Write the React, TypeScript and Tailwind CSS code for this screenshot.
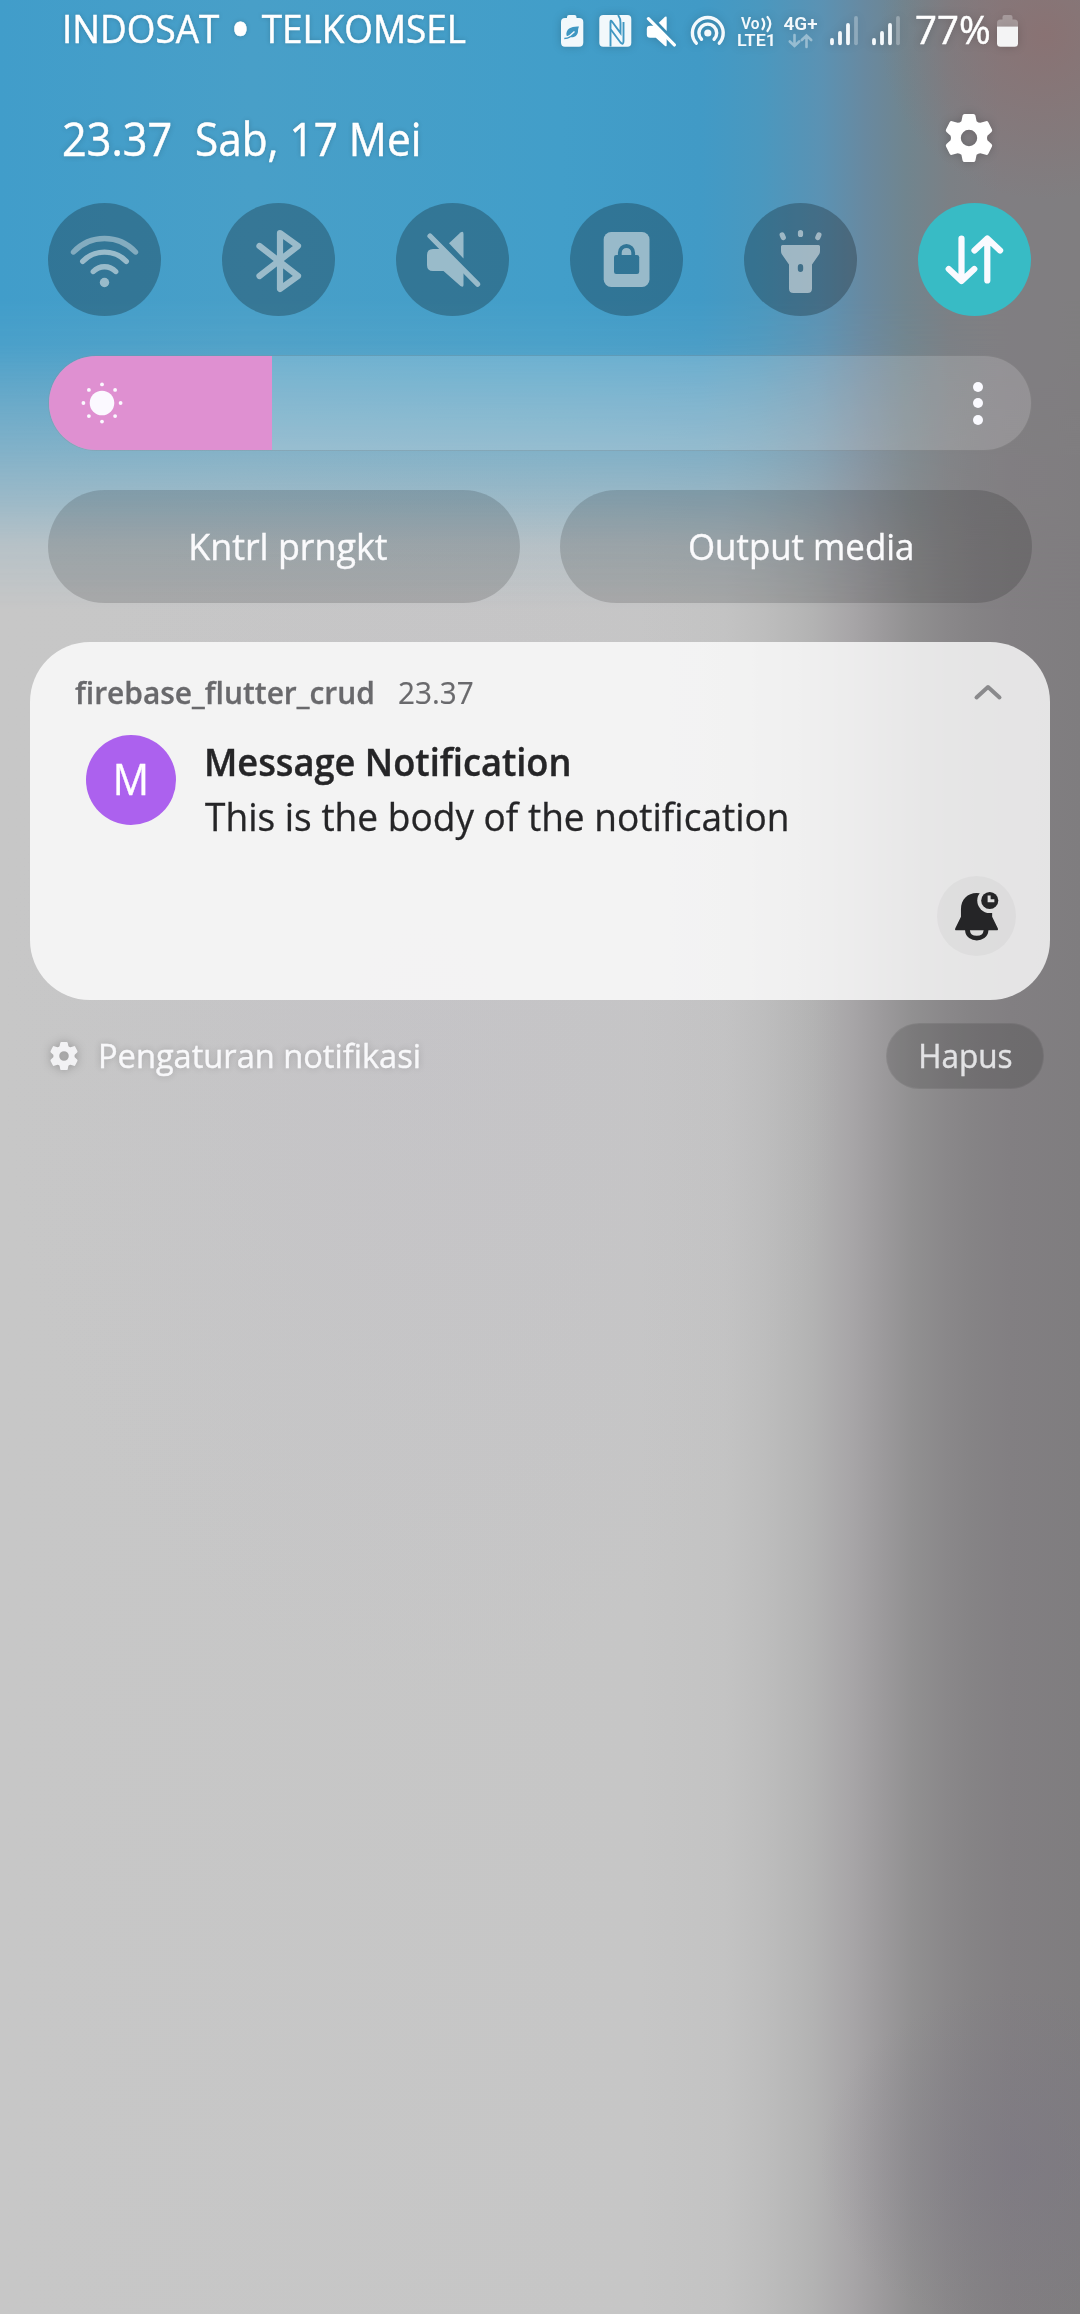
import type { ReactNode } from "react";

const ICON_SHADOW = "drop-shadow-[0_0_4px_rgba(0,0,0,0.18)]";

function Wallpaper() {
  return (
    <div className="absolute inset-0 overflow-hidden bg-[linear-gradient(90deg,#c7c7c7_0px,#c6c6c6_640px,#c3c3c3_725px,#bdbdbd_765px,#b3b3b3_812px,#a8a6a8_850px,#9b999b_885px,#919091_912px,#8a888a_945px,#858385_975px,#827f82_1010px,#7f7d7f_1080px)]">
      <div className="absolute left-0 top-[400px] h-[1300px] w-[850px] bg-[radial-gradient(closest-side,rgba(192,188,200,0.25),rgba(192,188,200,0))]" />
      <div className="absolute right-[-140px] top-[1990px] h-[340px] w-[400px] bg-[radial-gradient(closest-side,rgba(122,117,132,0.4),rgba(122,117,132,0))]" />
      <div className="absolute inset-x-0 top-0 h-[620px] bg-[linear-gradient(90deg,#419dca_0px,#489fc8_250px,#429ec9_560px,#419ac6_700px,#4a98bf_760px,#5b92b3_822px,#6889a0_865px,#70858f_905px,#7b8085_950px,#807e82_1000px,#807e80_1080px)] [mask-image:linear-gradient(180deg,#000_0px,#000_300px,rgba(0,0,0,0.93)_345px,rgba(0,0,0,0.7)_400px,rgba(0,0,0,0.47)_463px,rgba(0,0,0,0.3)_505px,rgba(0,0,0,0.12)_545px,transparent_610px)]" />
      <div className="absolute right-[-130px] top-[-130px] h-[330px] w-[330px] bg-[radial-gradient(closest-side,rgba(142,108,108,0.65),rgba(142,108,108,0))]" />
    </div>
  );
}

function MuteShape({ thick = false }: { thick?: boolean }) {
  return (
    <>
      <path d="M67.5 31 V55.5 L53 40.3 L64.5 29.6 Q67.5 27.5 67.5 31Z" />
      <path d="M37 46 H47 L67.5 67 V82 Q67.5 85 64.5 83 L47.5 68 H37 Q31 68 31 62 V52 Q31 46 37 46Z" />
      <path d="M34 33 L81.6 81.2" stroke="#fff" strokeWidth={thick ? 6 : 5.2} strokeLinecap="round" />
    </>
  );
}

function StatusBar() {
  return (
    <div className="flex h-[56px] items-start pl-[62px] pr-[62px] text-white">
      <span className="inline-block origin-left scale-x-[0.945] whitespace-nowrap text-[39px] leading-[56px] [-webkit-text-stroke:0.5px] [text-shadow:0_0_6px_rgba(0,0,0,0.2)]">
        INDOSAT <span className="relative top-[8px] mx-[1px] text-[60px] leading-[36px]">•</span> TELKOMSEL
      </span>
      <div className={"ml-auto flex items-start " + ICON_SHADOW}>
        <svg className="mt-[15px] h-8 w-[23px]" viewBox="561 15 23 32" fill="#f2f8fb">
          <path d="M567 18 V17 Q567 15 569 15 H574.500 Q576.500 15 576.500 17 V18 H579 Q583.300 18 583.300 22 V42.500 Q583.300 46.700 579 46.700 H565 Q561 46.700 561 42.500 V22 Q561 18 565 18Z" />
          <path d="M579 26.500 C572 26 565.500 28.500 566.500 35.500 C570 38.500 577.500 38 578 31.500 C578 29.500 578.300 28 579 26.500Z" fill="#3f97c2" />
          <path d="M574.500 31.500 C571.500 35 569 36.500 564.500 38.300" fill="none" stroke="#f2f8fb" strokeWidth="1.300" />
          <path d="M564.300 38.600 C567 38.600 568.500 38 570 37" fill="none" stroke="#3f97c2" strokeWidth="1.500" />
        </svg>
        <svg className="ml-[15px] mt-[15px] h-8 w-[33px]" viewBox="599 15 33 32" fill="none">
          <rect x="599.300" y="15" width="32" height="31.700" rx="4" fill="#f2f8fb" />
          <path d="M610.500 46.500 V22 Q610.500 19.500 612 21.500 L620.500 33 V23 Q620.500 18 618 15" stroke="#3f97c2" strokeWidth="1.900" />
          <path d="M610.800 29.500 L620.500 42.500 Q623.500 45.500 623.500 41 V22" stroke="#3f97c2" strokeWidth="1.900" />
        </svg>
        <svg className="ml-[14px] mt-[16px] h-[31px] w-[31px]" viewBox="30 28 56 57" fill="#fff">
          <MuteShape thick />
        </svg>
        <svg className="ml-[13px] mt-[15px] h-8 w-[36px]" viewBox="690 15 36 32" fill="none" stroke="#f4f9fc" strokeWidth="3.400" strokeLinecap="round">
          <circle cx="707.800" cy="33" r="3.600" fill="#f4f9fc" stroke="none" />
          <path d="M696.300 43.200 A15.400 15.400 0 1 1 719.300 43.200" />
          <path d="M701.500 39.300 A8.900 8.900 0 1 1 714.100 39.300" />
        </svg>
        <svg className="ml-[9px] mt-[11px] h-[40px] w-[44px] overflow-visible" viewBox="735 11 44 40" fill="#f4f9fc">
          <text x="741" y="28.900" fontFamily="Roboto" fontWeight="600" fontSize="16.500" textLength="18.500" lengthAdjust="spacingAndGlyphs">Vo</text>
          <path d="M762.500 19 Q766 24 762.500 29 M767.500 17 Q773 23.500 767.500 31" fill="none" stroke="#f4f9fc" strokeWidth="2.200" strokeLinecap="round" />
          <text x="737" y="46.200" fontFamily="Roboto" fontWeight="600" fontSize="17" textLength="39" lengthAdjust="spacingAndGlyphs">LTE1</text>
        </svg>
        <svg className="ml-[2px] mt-[9px] h-[40px] w-[40px] overflow-visible" viewBox="781 9 40 40" fill="#f4f9fc">
          <text x="783.600" y="29.500" fontFamily="Roboto" fontWeight="600" fontSize="18" textLength="34" lengthAdjust="spacingAndGlyphs">4G+</text>
          <path d="M794.500 35 V46 M789.800 41.500 L794.500 46 L799.200 41.500 M806.500 47 V36 M801.800 40 L806.500 35.500 L811.200 40" fill="none" stroke="#fff" strokeOpacity="0.400" strokeWidth="2.600" strokeLinecap="round" />
        </svg>
        {["ml-[9px]", "ml-[14px]"].map((margin) => (
          <svg key={margin} className={margin + " mt-[15px] h-8 w-[28px]"} viewBox="830 15 28 32" stroke="#f4f9fc" strokeWidth="3.800" strokeLinecap="round">
            <path d="M832 40 V43.300 M840 33 V43.300 M848 25 V43.300" />
            <path d="M856 18 V43.300" strokeOpacity="0.300" />
          </svg>
        ))}
        <span className="ml-[15px] inline-block origin-left scale-x-[0.984] whitespace-nowrap text-[39px] leading-[57px] [-webkit-text-stroke:0.5px]">77%</span>
        <svg className="ml-[5px] mt-[15px] h-8 w-[21px]" viewBox="997 15 21 32" fill="#f4f4f5">
          <path d="M1002.500 19.500 V17 Q1002.500 15 1004.500 15 H1010.500 Q1012.500 15 1012.500 17 V19.500 H1014.500 Q1018 19.500 1018 23 V26.500 H997 V23 Q997 19.500 1000.500 19.500Z" fillOpacity="0.300" />
          <path d="M997 26.500 H1018 V43.200 Q1018 46.700 1014.500 46.700 H1000.500 Q997 46.700 997 43.200Z" />
        </svg>
      </div>
    </div>
  );
}

function Gear({ className }: { className: string }) {
  return (
    <svg className={className} viewBox="-24 -24 48 48" fill="currentColor">
      <path
        fillRule="evenodd"
        d="M-4.500 -24 H4.500 Q6 -24 6.400 -22.500 L7.600 -16.800 Q9.200 -15.200 11.300 -15.200 L16.900 -16.800 Q18.400 -17.300 19.200 -15.900 L23 -8.600 Q23.600 -7.200 22.500 -6.100 L18.400 -2.200 Q17.600 0 18.400 2.200 L22.500 6.100 Q23.600 7.200 23 8.600 L19.200 15.900 Q18.400 17.300 16.900 16.800 L11.300 15.200 Q9.200 15.200 7.600 16.800 L6.400 22.500 Q6 24 4.500 24 H-4.500 Q-6 24 -6.400 22.500 L-7.600 16.800 Q-9.200 15.200 -11.300 15.200 L-16.900 16.800 Q-18.400 17.300 -19.200 15.900 L-23 8.600 Q-23.600 7.200 -22.500 6.100 L-18.400 2.200 Q-17.600 0 -18.400 -2.200 L-22.500 -6.100 Q-23.600 -7.200 -23 -8.600 L-19.200 -15.900 Q-18.400 -17.300 -16.900 -16.800 L-11.300 -15.200 Q-9.200 -15.200 -7.600 -16.800 L-6.400 -22.500 Q-6 -24 -4.500 -24Z M0 -8.200 A8.200 8.200 0 1 0 0 8.200 A8.200 8.200 0 1 0 0 -8.200Z"
      />
    </svg>
  );
}

function Toggle({ active = false, children }: { active?: boolean; children: ReactNode }) {
  return (
    <div className={active ? "size-[113px] rounded-full bg-[#38bbc5]" : "size-[113px] rounded-full bg-black/25"}>
      <svg className={active ? "size-full" : "size-full opacity-50"} viewBox="0 0 113 113" fill="#fff">
        {children}
      </svg>
    </div>
  );
}

function QuickToggles() {
  return (
    <div className="mt-[36px] flex justify-between pl-[48px] pr-[49px]">
      <Toggle>
        <g fill="none" stroke="#fff" strokeWidth="5.400" strokeLinecap="round">
          <path d="M25.500 49 A42.400 42.400 0 0 1 87.500 49" strokeOpacity="0.780" />
          <path d="M34.700 58.300 A30.500 30.500 0 0 1 78.300 58.300" />
          <path d="M45.300 68.500 A15.500 15.500 0 0 1 67.700 68.500" />
        </g>
        <circle cx="56.500" cy="79.500" r="4.700" />
      </Toggle>
      <Toggle>
        <path d="M37.500 43 L76 73 L58 86 V30 L76 43 L37.500 73" fill="none" stroke="#fff" strokeWidth="6.200" strokeLinecap="round" strokeLinejoin="round" />
      </Toggle>
      <Toggle>
        <MuteShape />
      </Toggle>
      <Toggle>
        <mask id="lock-cut">
          <rect width="113" height="113" fill="#fff" />
          <rect x="44" y="52" width="25.200" height="19" rx="2.200" fill="#000" />
          <path d="M49.800 54 V49.700 A6.700 6.700 0 0 1 63.200 49.700 V54" fill="none" stroke="#000" strokeWidth="3.800" />
        </mask>
        <rect x="33.700" y="29" width="45.800" height="55" rx="7.500" mask="url(#lock-cut)" />
      </Toggle>
      <Toggle>
        <path
          fillRule="evenodd"
          d="M38.500 42 H74.500 Q76 42 76 43.500 V48 Q76 50 75 51.500 L68 61.500 V85.500 Q68 90 63.500 90 H49.500 Q45 90 45 85.500 V61.500 L38 51.500 Q37 50 37 48 V43.500 Q37 42 38.500 42Z M56.500 61 Q53.800 61 53.800 64 V66 Q53.800 69 56.500 69 Q59.200 69 59.200 66 V64 Q59.200 61 56.500 61Z"
        />
        <path d="M56.500 29.600 V31.500 M38.200 31.900 L39.300 34.500 M74.900 31.900 L73.800 34.500" stroke="#fff" strokeWidth="5.200" strokeLinecap="round" />
      </Toggle>
      <Toggle active>
        <path d="M43.500 35.500 V77 M30.700 66 L43.500 78 L56.300 66 M69.300 77.500 V36 M56.500 47.500 L69.300 35.500 L82.100 47.500" fill="none" stroke="#fafaff" strokeWidth="6.200" strokeLinecap="round" strokeLinejoin="round" />
      </Toggle>
    </div>
  );
}

const RAYS = [[0, -18.6], [13.1, -13.1], [18.6, 0], [13.1, 13.1], [0, 18.6], [-13.1, 13.1], [-18.6, 0], [-13.1, -13.1]];

function BrightnessSlider() {
  return (
    <div className="ml-[48px] mr-[48px] mt-[39px] flex h-[96px] overflow-hidden rounded-full border border-black/12 bg-white/16">
      <div className="flex w-[223px] items-center bg-[#df90d1] pl-[32px]">
        <svg className="size-[42px]" viewBox="-21 -21 42 42" fill="#fbf9ff">
          <circle r="12.300" />
          {RAYS.map(([x, y]) => (
            <circle key={x + "," + y} cx={x} cy={y} r="1.900" />
          ))}
        </svg>
      </div>
      <div className="ml-auto mr-[48px] flex flex-col items-center justify-center gap-[6.500px]">
        <span className="size-[10px] rounded-full bg-[#fafaff]" />
        <span className="size-[10px] rounded-full bg-[#fafaff]" />
        <span className="size-[10px] rounded-full bg-[#fafaff]" />
      </div>
    </div>
  );
}

function NotificationCard() {
  return (
    <div className="ml-[30px] mr-[30px] mt-[39px] flex h-[358px] flex-col rounded-[60px] bg-white/79">
      <div className="flex h-[100px] items-center pl-[45px] pr-[47px] text-[31px] leading-[104px] text-[#69696c]">
        <span className="inline-block origin-left scale-x-[0.965] whitespace-nowrap font-semibold [-webkit-text-stroke:0.3px]">firebase_flutter_crud</span>
        <span className="ml-[12px] inline-block origin-left scale-x-[0.957] [-webkit-text-stroke:0.2px]">23.37</span>
        <svg className="ml-auto mt-px h-[18px] w-[30px]" viewBox="0 0 30 18" fill="none" stroke="#8a8a8c" strokeWidth="4" strokeLinecap="round" strokeLinejoin="round">
          <path d="M3.500 13.500 L15 3 L26.500 13.500" />
        </svg>
      </div>
      <div className="flex pl-[56px]">
        <div className="mt-[-7px] flex size-[90px] items-center justify-center rounded-full bg-[#ac61ee] text-[44px] text-white">
          <span className="inline-block scale-x-[0.916] pb-[3px] leading-[85px] [-webkit-text-stroke:0.4px]">M</span>
        </div>
        <div className="ml-[28px] mt-[-8px] text-[38px] text-[#252527]">
          <p className="origin-left scale-x-[0.953] whitespace-nowrap font-semibold leading-[54px] [-webkit-text-stroke:0.4px]">Message Notification</p>
          <p className="ml-px origin-left scale-x-[0.975] whitespace-nowrap leading-[56px] [-webkit-text-stroke:0.3px]">This is the body of the notification</p>
        </div>
      </div>
      <div className="mb-[44.500px] ml-auto mr-[34px] mt-auto size-[79.500px] rounded-full bg-black/3">
        <svg className="size-full" viewBox="0 0 79 79" fill="#252527">
          <mask id="bell-cut">
            <rect width="79" height="79" fill="#fff" />
            <circle cx="52.400" cy="24.400" r="12.400" fill="#000" />
          </mask>
          <path mask="url(#bell-cut)" d="M39.300 17 C48 17 54.800 23.500 54.800 33 V40.500 L60.400 51.800 Q61.200 54 59 54 H19.500 Q17.300 54 18.200 51.800 L23.800 40.500 V33 C23.800 23.500 30.500 17 39.300 17Z" />
          <path d="M30.300 53 V54 C31 64.300 48 64.300 48.700 54 V53" fill="none" stroke="#252527" strokeWidth="4.800" />
          <circle cx="52.400" cy="24.400" r="8.500" />
          <path d="M50.300 19.500 H53.300 V23.200 H57 V26.200 H50.300Z" fill="#dedede" />
        </svg>
      </div>
    </div>
  );
}

export default function App() {
  return (
    <div className="relative h-[2314px] w-[1080px] overflow-hidden font-['Open_Sans',sans-serif]">
      <Wallpaper />
      <div className="relative flex flex-col">
        <StatusBar />
        <div className="mt-[51px] flex h-[60px] items-center pl-[62px] pr-[87px] text-[45px] leading-[60px] text-white [-webkit-text-stroke:0.5px] [text-shadow:0_0_6px_rgba(0,0,0,0.2)]">
          <span className="inline-block origin-left scale-x-[0.96] pt-[3px]">23.37</span>
          <span className="ml-[18.700px] inline-block origin-left scale-x-[0.94] whitespace-nowrap pt-[3px]">Sab, 17 Mei</span>
          <Gear className={"ml-auto mt-[2px] size-[48px] " + ICON_SHADOW} />
        </div>
        <QuickToggles />
        <BrightnessSlider />
        <div className="ml-[48px] mr-[48px] mt-[39px] grid grid-cols-2 gap-[40px] text-[37px] leading-[112px] text-[#fafafc] [-webkit-text-stroke:0.4px]">
          <div className="flex h-[113px] justify-center rounded-full bg-black/15 pl-[8px]">
            <span className="inline-block scale-x-[0.969] whitespace-nowrap">Kntrl prngkt</span>
          </div>
          <div className="flex h-[113px] justify-center rounded-full bg-black/15 pl-[10px]">
            <span className="inline-block scale-x-[0.942] whitespace-nowrap">Output media</span>
          </div>
        </div>
        <NotificationCard />
        <div className="mt-[23px] flex h-[66px] items-center pl-[50px] pr-[36px] text-[33px] leading-[64px] [-webkit-text-stroke:0.4px]">
          <Gear className="size-[28px] text-[#f2f2f4] drop-shadow-[0_0_5px_rgba(0,0,0,0.25)]" />
          <span className="ml-[20px] inline-block origin-left scale-x-[0.988] whitespace-nowrap text-[#f8f8fa] [text-shadow:0_0_8px_rgba(0,0,0,0.22)]">
            Pengaturan notifikasi
          </span>
          <div className="ml-auto flex h-[66px] w-[158px] justify-center rounded-full border border-white/5 bg-black/15 text-[#e2e2e4]">
            <span className="inline-block scale-x-[0.955]">Hapus</span>
          </div>
        </div>
      </div>
    </div>
  );
}
